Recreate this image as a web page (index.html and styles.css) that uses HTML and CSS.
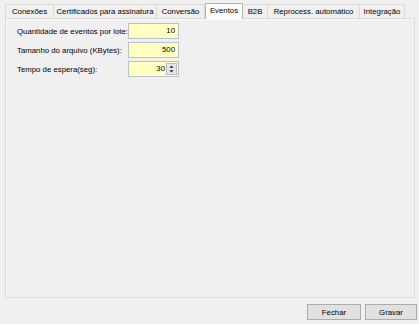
FILE: index.html
```html
<!DOCTYPE html>
<html lang="pt">
  <head>
    <meta charset="UTF-8" />
    <title>Configurações</title>
    <link rel="stylesheet" href="styles.css">
  </head>
  <body>
    <div class="window">
      <div class="tabs">
        <div class="tab tab-conexoes">Conexões</div>
        <div class="tab tab-certificados">Certificados para assinatura</div>
        <div class="tab tab-conversao">Conversão</div>
        <div class="tab tab-eventos active">Eventos</div>
        <div class="tab tab-b2b">B2B</div>
        <div class="tab tab-reprocess">Reprocess. automático</div>
        <div class="tab tab-integracao">Integração</div>
      </div>
      <div class="page">
        <div class="row">
          <span class="label">Quantidade de eventos por lote:</span>
          <div class="field">10</div>
        </div>
        <div class="row">
          <span class="label">Tamanho do arquivo (KBytes):</span>
          <div class="field">500</div>
        </div>
        <div class="row">
          <span class="label">Tempo de espera(seg):</span>
          <div class="field spin">
            <span class="value">30</span>
            <div class="spinner">
              <svg width="9" height="6" viewBox="0 0 9 6"><path d="M2 4.5h5L4.5 1.8z" fill="#222"/></svg>
              <svg width="9" height="6" viewBox="0 0 9 6"><path d="M2 1.5h5L4.5 4.2z" fill="#222"/></svg>
            </div>
          </div>
        </div>
      </div>
      <div class="buttons">
        <button class="btn">Fechar</button>
        <button class="btn">Gravar</button>
      </div>
    </div>
  </body>
</html>
```

FILE: styles.css
```css
body {
  margin: 0;
  background-color: #f0f0f0;
  font-family: "Liberation Sans", Arial, sans-serif;
  font-size: 7.8px;
  color: #000;
}

.window {
  width: 419px;
  height: 324px;
  padding: 2px 0 0 5px;
  box-sizing: border-box;
}

.tabs {
  display: flex;
  align-items: flex-end;
  height: 16px;
  position: relative;
  z-index: 1;
}

.tab {
  height: 14px;
  line-height: 13px;
  text-align: center;
  border: 1px solid #d9d9d9;
  border-bottom: none;
  border-left: none;
  box-sizing: border-box;
  background-color: #f0f0f0;
  white-space: nowrap;
}

.tab:first-child {
  border-left: 1px solid #d9d9d9;
}

/* widths follow the original tab strip */
.tab-conexoes { width: 49px; }
.tab-certificados { width: 103px; }
.tab-conversao { width: 48px; }
.tab-eventos { width: 38px; }
.tab-b2b { width: 25px; }
.tab-reprocess { width: 92px; }
.tab-integracao { width: 45px; }

.tab.active {
  height: 16px;
  line-height: 14px;
  margin-bottom: -1px;
  border: 1px solid #b4b4b4;
  border-bottom: none;
  background-color: #fff;
  position: relative;
  z-index: 2;
}

.page {
  width: 410px;
  height: 280px;
  box-sizing: border-box;
  border: 1px solid #d9d9d9;
  box-shadow: inset 1px 1px 0 #fbfbfb;
  padding: 4px 0 0 11px;
  display: flex;
  flex-direction: column;
  gap: 3px;
}

.row {
  display: flex;
  align-items: center;
  height: 16px;
}

.label {
  width: 111px;
  white-space: nowrap;
}

.field {
  width: 51px;
  height: 16px;
  box-sizing: border-box;
  border: 1px solid #b6c2cd;
  background-color: #ffffc4;
  text-align: right;
  line-height: 14px;
  padding-right: 3px;
}

.field.spin {
  display: flex;
  align-items: center;
  justify-content: flex-end;
  gap: 1px;
  padding-right: 1px;
}

.spinner {
  display: flex;
  flex-direction: column;
  width: 11px;
  height: 12px;
  background-color: #e6e6e6;
  border: 1px solid #bcbcbc;
  box-sizing: border-box;
}

.spinner svg {
  display: block;
  width: 9px;
  height: 5px;
}

.buttons {
  display: flex;
  justify-content: flex-end;
  gap: 4px;
  padding: 6px 2px 0 0;
}

.btn {
  width: 54px;
  height: 16px;
  padding: 0;
  font-family: inherit;
  font-size: 7.8px;
  color: #000;
  background-color: #e1e1e1;
  border: 1px solid #adadad;
  border-radius: 0;
}

.btn + .btn {
  width: 52px;
}
```
